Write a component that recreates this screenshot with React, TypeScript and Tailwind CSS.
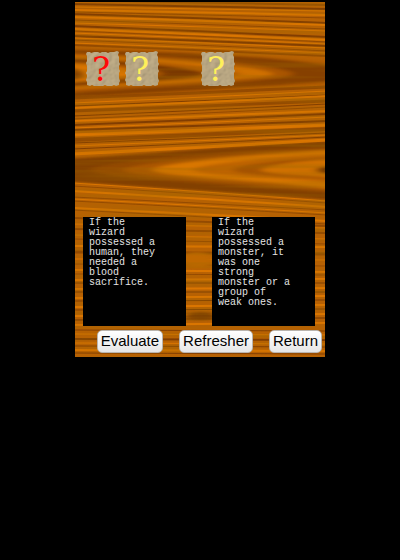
import React from "react";

type Streak = [left: number, right: number, width: number, tone: "dark" | "light" | "mid"];

const TONES = { dark: "#743600", light: "#e57c05", mid: "#8c4500" };

// Grain lines: height at the left edge, height at the right edge, thickness, tone.
const streaks: Streak[] = [
  [-2, 3, 2, "mid"], [2, 7, 2, "dark"], [5, 9, 1, "light"], [8, 13, 2, "light"],
  [10, 16, 1, "mid"], [12, 21, 2, "dark"], [15, 23, 2, "light"], [18, 27, 1, "mid"],
  [21, 29, 1, "light"], [24, 35, 2, "dark"], [27, 38, 2, "light"], [29, 40, 1, "mid"],
  [31, 42, 1, "light"], [34, 44, 2, "dark"], [36, 46, 1, "light"], [38, 49, 1, "mid"],
  [41, 51, 1, "light"], [43, 54, 2, "mid"],
  [96, 85, 3, "mid"], [101, 89, 1, "light"], [104, 93, 1, "dark"], [106, 94, 2, "light"],
  [109, 99, 3, "mid"], [114, 102, 1, "dark"], [117, 105, 1, "mid"], [119, 109, 2, "light"],
  [123, 112, 2, "dark"], [126, 115, 1, "light"], [128, 119, 2, "dark"], [133, 123, 3, "light"],
  [138, 127, 4, "mid"], [141, 131, 1, "dark"], [144, 133, 1, "light"], [147, 135, 1, "dark"],
  [152, 138, 3, "light"],
  [181, 199, 1, "light"], [184, 201, 1, "mid"], [189, 205, 2, "light"],
  [195, 208, 1, "mid"], [197, 211, 1, "light"], [199, 213, 1, "mid"], [206, 219, 2, "light"],
  [208, 222, 1, "mid"], [216, 224, 2, "mid"], [222, 226, 1, "light"], [227, 231, 2, "mid"],
  [233, 237, 1, "light"], [237, 242, 1, "mid"], [244, 245, 2, "light"], [250, 252, 3, "mid"],
  [257, 258, 1, "light"], [262, 264, 1, "mid"], [268, 270, 2, "light"], [272, 273, 1, "mid"],
  [278, 277, 2, "light"], [281, 281, 1, "dark"], [287, 286, 2, "light"], [290, 290, 1, "dark"],
  [296, 294, 2, "light"], [299, 298, 1, "dark"], [305, 303, 2, "light"], [308, 307, 1, "dark"],
  [314, 312, 2, "light"], [318, 316, 2, "mid"], [323, 321, 2, "light"], [328, 329, 1, "dark"],
  [332, 333, 1, "light"], [337, 338, 2, "dark"], [341, 342, 1, "light"], [344, 345, 1, "dark"],
  [348, 349, 2, "light"], [351, 352, 1, "dark"],
];

function WoodGrain() {
  return (
    <svg
      className="absolute inset-0 h-full w-full"
      viewBox="0 0 250 355"
      preserveAspectRatio="none"
      aria-hidden="true"
    >
      <defs>
        <filter id="soft" x="-10%" y="-30%" width="120%" height="160%">
          <feGaussianBlur stdDeviation="4 1" />
        </filter>
        <filter id="line" filterUnits="userSpaceOnUse" x="0" y="0" width="250" height="355">
          <feGaussianBlur stdDeviation="0.6" />
        </filter>
        <filter id="fibre" x="0" y="0" width="100%" height="100%">
          <feTurbulence type="fractalNoise" baseFrequency="0.006 0.22" numOctaves="2" seed="8" />
          <feColorMatrix values="0 0 0 0 0.35  0 0 0 0 0.14  0 0 0 0 0  2.4 0 0 0 -0.95" />
        </filter>
      </defs>
      <rect width="250" height="355" fill="#b76103" />

      <g filter="url(#soft)">
        <path d="M-10 46C90 48 190 54 260 60V83C190 86 90 92-10 97Z" fill="#b05b03" />
        <path d="M-10 48C110 50 180 53 260 64V79C200 84 100 89-10 96Z" fill="#863f00" />
        <path d="M-10 51C110 53 218 65 218 72C218 78 100 84-10 91Z" fill="#a95502" />
        <path d="M-10 53C90 55 198 66 198 72C198 77 90 81-10 88Z" fill="#cf6f05" />
        <path d="M-10 55C75 57 165 67 165 72C165 76 75 80-10 86Z" fill="#b35d03" />
        <path d="M-10 57C65 59 130 68 130 72C130 76 60 80-10 84Z" fill="#7a3800" />
        <path d="M-10 60C50 60 88 68 88 72C88 76 40 78-10 82Z" fill="#ac5602" />
        <path d="M-10 62C35 62 64 68 64 72C64 76 25 77-10 80Z" fill="#d87405" />
        <path d="M-10 65C0 66 9 69 9 73C9 77 0 78-10 78Z" fill="#853f00" />

        <path d="M260 139C170 143 70 152-10 157V179C70 185 160 191 260 198Z" fill="#824000" />
        <path d="M260 145C150 148 16 161 16 168C16 175 150 183 260 191Z" fill="#934901" />
        <path d="M260 147C170 150 48 162 48 168C48 174 170 182 260 189Z" fill="#aa5703" />
        <path d="M260 148C180 152 78 162 78 168C78 174 180 178 260 187Z" fill="#d87605" />
        <path d="M260 152C200 154 118 163 118 168C118 173 200 175 260 181Z" fill="#bd6403" />
        <path d="M260 155C220 156 158 163 158 168C158 173 220 174 260 178Z" fill="#a55303" />
        <path d="M260 157C230 158 186 164 186 168C186 172 230 173 260 176Z" fill="#cf7005" />
        <path d="M260 164C250 164 242 165 242 168C242 171 250 172 260 172Z" fill="#713500" />
      </g>

      <g filter="url(#line)" fill="none">
        {streaks.map(([left, right, width, tone], i) => (
          <path
            key={i}
            d={`M-2 ${left}C80 ${left + (right - left) * 0.3} 170 ${left + (right - left) * 0.65} 252 ${right}`}
            stroke={TONES[tone]}
            strokeWidth={width}
            opacity={0.8}
          />
        ))}
      </g>
      <g filter="url(#soft)">
        <ellipse cx="122" cy="258" rx="18" ry="8" fill="#c06803" />
        <ellipse cx="126" cy="314" rx="16" ry="4" fill="#7c3c00" />
      </g>
      <rect width="250" height="355" filter="url(#fibre)" opacity="0.4" />
    </svg>
  );
}

function ClueTile({ color, label }: { color: string; label: string }) {
  return (
    <div className="relative flex h-9 w-[34px] items-center justify-center" aria-label={label}>
      <svg className="absolute inset-0 h-full w-full" viewBox="0 0 34 36" aria-hidden="true">
        <defs>
          <filter id="stone" x="0" y="0" width="100%" height="100%">
            <feTurbulence type="fractalNoise" baseFrequency="0.16" numOctaves="2" seed="4" result="n" />
            <feDiffuseLighting in="n" surfaceScale="0.9" lightingColor="#c3b08a" result="lit">
              <feDistantLight azimuth="225" elevation="62" />
            </feDiffuseLighting>
            <feComposite in="lit" in2="SourceGraphic" operator="in" />
          </filter>
        </defs>
        <path
          filter="url(#stone)"
          fill="#b5a783"
          d="M1 1L4 1L5 2L8 1L9 1L12 1L14 2L16 1L18 1L20 1L22 2L24 1L27 1L28 1L31 0L33 1L32 4L33 6L33 8L33 11L34 13L33 15L33 18L34 20L33 22L33 25L33 27L34 30L33 32L33 34L30 35L28 34L26 35L23 35L21 35L19 34L17 35L14 35L12 35L10 35L8 35L6 34L4 35L1 34L1 31L0 29L1 26L1 24L0 22L1 20L1 17L1 15L0 12L1 10L1 8L1 5L0 3Z"
        />
      </svg>
      <span
        className={`relative pr-1 font-['DejaVu_Serif','Liberation_Serif',serif] text-[34px] leading-9 ${color}`}
      >
        ?
      </span>
    </div>
  );
}

function Note({ children }: { children: React.ReactNode }) {
  return (
    <div className="h-[109px] w-[103px] bg-black pt-px pl-1.5">
      <p className="w-[75px] font-['Liberation_Mono',monospace] text-[10px] leading-[10px] text-[#e4e4e4]">
        {children}
      </p>
    </div>
  );
}

function ActionButton({ children }: { children: React.ReactNode }) {
  return (
    <button
      type="button"
      className="h-[23px] rounded-[5px] border border-[#b9b4ae] bg-linear-to-b from-white to-[#e6e6e6] px-[3px] pb-0.5 font-['Liberation_Sans',sans-serif] text-[15px] leading-[18px] text-black"
    >
      {children}
    </button>
  );
}

export default function App() {
  return (
    <div className="min-h-screen bg-black pt-0.5">
      <main className="relative isolate mx-auto w-[250px] overflow-hidden">
        <WoodGrain />
        <div className="relative flex flex-col pt-[49px] pb-1">
          <div className="flex gap-[5px] pl-[11px]">
            <ClueTile color="text-[#ff0808]" label="Red clue" />
            <ClueTile color="text-[#fff05a]" label="Yellow clue" />
            <div className="w-[32px]" />
            <ClueTile color="text-[#fff05a]" label="Yellow clue" />
          </div>
          <div className="mt-[130px] flex gap-[26px] pl-2">
            <Note>If the wizard possessed a human, they needed a blood sacrifice.</Note>
            <Note>If the wizard possessed a monster, it was one strong monster or a group of weak ones.</Note>
          </div>
          <div className="mt-1 flex justify-end gap-4 pr-[3px]">
            <ActionButton>Evaluate</ActionButton>
            <ActionButton>Refresher</ActionButton>
            <ActionButton>Return</ActionButton>
          </div>
        </div>
      </main>
    </div>
  );
}
